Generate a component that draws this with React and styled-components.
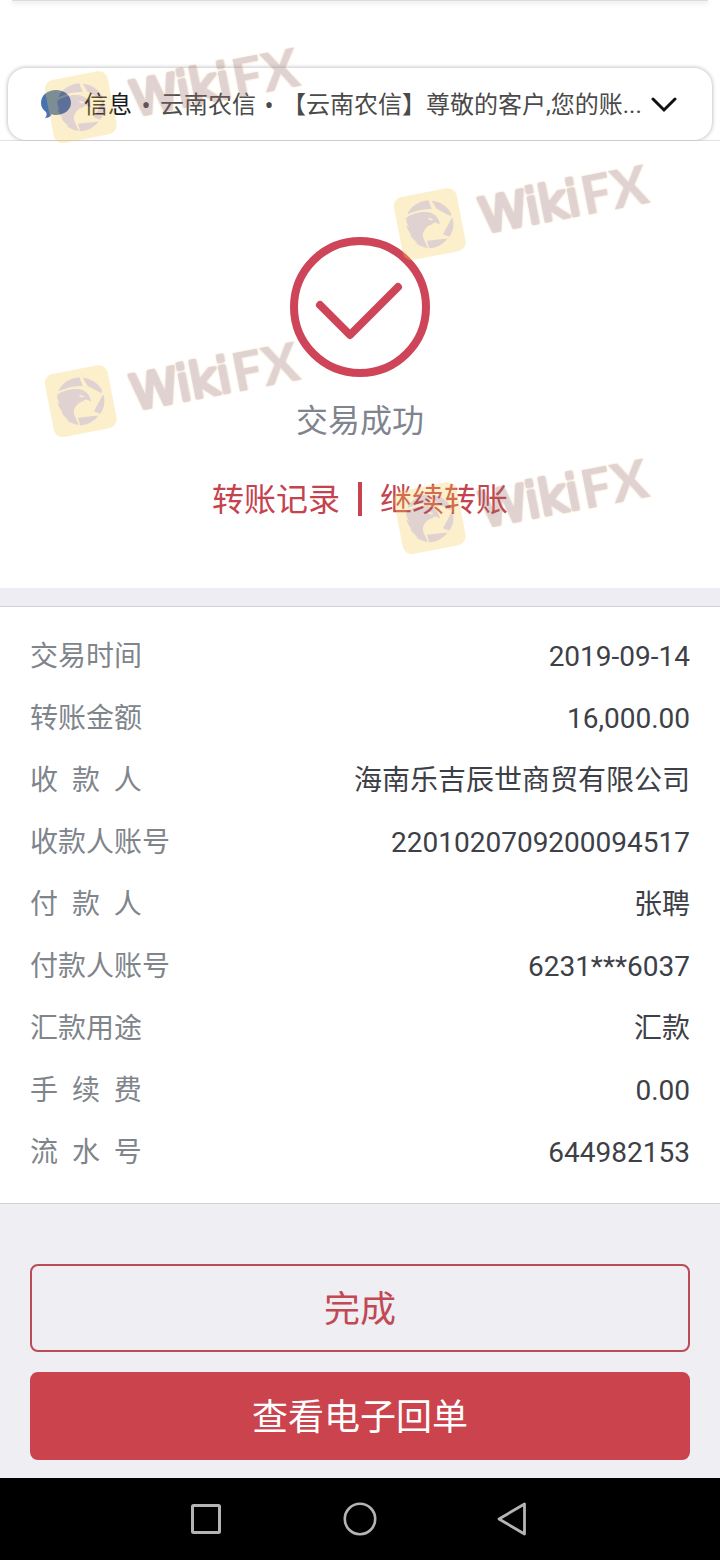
import React from "react";
import styled, { createGlobalStyle } from "styled-components";

const GlobalStyle = createGlobalStyle`
  * { box-sizing: border-box; }
  body {
    margin: 0;
    background: #fff;
    font-family: Roboto, "Noto Sans CJK SC", sans-serif;
    color: #3f4248;
  }
  button { font: inherit; cursor: pointer; }
`;

const Page = styled.div`
  position: relative;
  overflow: hidden;
`;

const TopArea = styled.header`
  padding: 0 8px;
  border-bottom: 1px solid #e2e2e2;
  background: #fff;
`;

const PreviousCard = styled.div`
  height: 1px;
  margin: 0 4px 67px;
  background: #ddd;
  box-shadow: 0 1px 5px #aaa;
`;

const Notification = styled.div`
  display: flex;
  align-items: center;
  height: 72px;
  padding: 2px 34px 0 33px;
  border-radius: 18px;
  background: #fff;
  box-shadow: 0 0 4px #aaa;
  font-size: 24px;
  line-height: 36px;
  white-space: nowrap;
  color: #4a4a4a;
`;

const BubbleIcon = styled.svg`
  flex: none;
  width: 30px;
  height: 30px;
  margin-right: 13px;
`;

const AppName = styled.span`
  color: #1c1c1c;
`;

const Dot = styled.span`
  flex: none;
  width: ${(p) => p.$width}px;
  font-family: "Noto Sans", sans-serif;
  text-align: center;
`;

const Message = styled.span`
  flex: 1;
  min-width: 0;
  overflow: hidden;
`;

const ExpandButton = styled.button`
  display: flex;
  padding: 0;
  border: 0;
  background: none;
  color: #111;
`;

const Result = styled.section`
  display: flex;
  flex-direction: column;
  align-items: center;
  padding: 96px 0 64px;
  background: #fff;
`;

const ResultTitle = styled.h1`
  margin: 20px 0 29px;
  font-size: 32px;
  font-weight: 400;
  line-height: 48px;
  color: #7f848e;
`;

const Links = styled.nav`
  display: flex;
  align-items: center;
  gap: 18px;
  font-size: 32px;
  line-height: 48px;
`;

const ResultLink = styled.a`
  padding-top: 2px;
  color: #c4434e;
  text-decoration: none;
`;

const Divider = styled.span`
  width: 4px;
  height: 34px;
  background: #c5444f;
`;

const Details = styled.dl`
  margin: 0;
  padding: 19px 30px;
  border-top: 1px solid #d2d2d4;
  border-bottom: 1px solid #d2d2d4;
  background: #fff;
`;

const Strip = styled.div`
  height: 18px;
  background: #eeedf4;
`;

const DetailRow = styled.div`
  display: flex;
  justify-content: space-between;
  align-items: center;
  font-size: 28px;
  line-height: 62px;
`;

const Term = styled.dt`
  white-space: pre;
  color: #80858c;
`;

const Value = styled.dd`
  margin: 0;
  color: #3d4047;
`;

const Actions = styled.section`
  display: flex;
  flex-direction: column;
  gap: 20px;
  padding: 60px 30px 18px;
  background: #efeef3;
`;

const ActionButton = styled.button`
  height: 88px;
  padding: 4px 0 0;
  border: 2px solid ${(p) => (p.$filled ? "#cb434d" : "#bb4b56")};
  border-radius: 8px;
  background: ${(p) => (p.$filled ? "#cb434d" : "transparent")};
  color: ${(p) => (p.$filled ? "#fff" : "#c04954")};
  font-size: 36px;
  line-height: 54px;
`;

const SystemBar = styled.nav`
  display: flex;
  justify-content: center;
  align-items: center;
  gap: 120px;
  height: 82px;
  background: #000;
`;

const SystemButton = styled.button`
  display: flex;
  padding: 0;
  border: 0;
  background: none;
  color: #b4b4b4;
`;

const WatermarkLayer = styled.div`
  position: absolute;
  top: 58px;
  left: 48px;
  display: grid;
  grid-template-columns: 252px 252px;
  column-gap: 97px;
  pointer-events: none;
`;

const WatermarkColumn = styled.div`
  display: flex;
  flex-direction: column;
  gap: 232px;
  padding-top: ${(p) => (p.$lower ? 117 : 0)}px;
`;

const Mark = styled.svg`
  display: block;
  width: 252px;
  height: 62px;
  overflow: visible;
  transform: rotate(-11deg);
  opacity: 0.3;
`;

const MarkName = styled.g`
  filter: drop-shadow(0 0 1px #f8cd55);
`;

const details = [
  ["交易时间", "2019-09-14"],
  ["转账金额", "16,000.00"],
  ["收\u00a0\u00a0款\u00a0\u00a0人", "海南乐吉辰世商贸有限公司"],
  ["收款人账号", "2201020709200094517"],
  ["付\u00a0\u00a0款\u00a0\u00a0人", "张聘"],
  ["付款人账号", "6231***6037"],
  ["汇款用途", "汇款"],
  ["手\u00a0\u00a0续\u00a0\u00a0费", "0.00"],
  ["流\u00a0\u00a0水\u00a0\u00a0号", "644982153"],
];

function Watermark() {
  return (
    <Mark viewBox="0 0 252 62" aria-hidden="true">
      <rect x="-1" y="-1" width="64" height="64" rx="9" fill="#f8cd55" />
      <g transform="translate(31 31) rotate(11) scale(.34) translate(-90 -95)" fill="#986c69">
        <path d="M24 66 C34 43 58 27 86 25 L96 51 C72 49 48 56 24 66Z" />
        <path d="M96 26 C121 28 142 42 153 64 L151 72 L110 50Z" />
        <path d="M157 76 C163 98 158 118 147 132 L129 125 L153 80Z" />
        <path d="M142 138 C128 156 109 165 88 166 L82 144 L136 138Z" />
        <path d="M21 76 C42 62 76 54 98 64 C108 69 118 80 120 97 C113 91 108 90 101 91 C98 98 90 97 84 101 C76 108 68 118 70 132 C73 143 80 153 84 165 C69 163 57 158 47 150 L55 151 C44 142 35 134 32 124 L39 129 C28 117 23 108 22 98 L30 105 C23 95 20 86 21 76Z" />
        <path d="M84 76 L101 80 L96 84 L88 82Z" fill="#f8cd55" />
      </g>
      <MarkName fill="#986c69">
        <text
          x="82"
          y="50"
          fontFamily="DejaVu Sans, sans-serif"
          fontSize="48"
          stroke="#986c69"
          strokeWidth="4"
          strokeLinejoin="round"
        >
          Wiki
        </text>
        <text x="185" y="52" fontFamily="Lato, sans-serif" fontSize="54" fontWeight="900">
          FX
        </text>
      </MarkName>
    </Mark>
  );
}

export default function App() {
  return (
    <>
      <GlobalStyle />
      <Page>
        <TopArea>
          <PreviousCard />
          <Notification>
            <BubbleIcon viewBox="0 0 30 30" aria-hidden="true">
              <path
                d="M15 0 C23 0 30 5 30 13 C30 20 23 25 15 25 C13 25 12 25 11 24 C9 27 7 28 4 28 C6 26 6 24 5 22 C2 20 0 17 0 13 C0 5 7 0 15 0Z"
                fill="#4673b0"
              />
            </BubbleIcon>
            <AppName>信息</AppName>
            <Dot $width={28}>•</Dot>
            <span>云南农信</span>
            <Dot $width={26}>•</Dot>
            <Message>【云南农信】尊敬的客户,您的账...</Message>
            <ExpandButton type="button" aria-label="展开">
              <svg width="28" height="16" viewBox="0 0 28 16" fill="none" stroke="currentColor" strokeWidth="3" strokeLinecap="round">
                <path d="M3 2 L14 13 L25 2" />
              </svg>
            </ExpandButton>
          </Notification>
        </TopArea>

        <main>
          <Result>
            <svg width="140" height="140" viewBox="0 0 140 140" fill="none" stroke="#ce455a" aria-hidden="true">
              <circle cx="70" cy="70" r="66" strokeWidth="8" />
              <path d="M30 68 L60 98 L108 50" strokeWidth="8" strokeLinecap="round" strokeLinejoin="round" />
            </svg>
            <ResultTitle>交易成功</ResultTitle>
            <Links>
              <ResultLink href="#records">转账记录</ResultLink>
              <Divider />
              <ResultLink href="#transfer">继续转账</ResultLink>
            </Links>
          </Result>
          <Strip />
          <Details>
            {details.map(([term, value]) => (
              <DetailRow key={term}>
                <Term>{term}</Term>
                <Value>{value}</Value>
              </DetailRow>
            ))}
          </Details>
          <Actions>
            <ActionButton type="button">完成</ActionButton>
            <ActionButton type="button" $filled>查看电子回单</ActionButton>
          </Actions>
        </main>

        <SystemBar aria-label="系统导航">
          <SystemButton type="button" aria-label="最近任务">
            <svg width="34" height="34" viewBox="0 0 34 34" fill="none" stroke="currentColor" strokeWidth="3">
              <rect x="3.5" y="3.5" width="27" height="27" rx="1" />
            </svg>
          </SystemButton>
          <SystemButton type="button" aria-label="主屏幕">
            <svg width="34" height="34" viewBox="0 0 34 34" fill="none" stroke="currentColor" strokeWidth="2.6">
              <circle cx="17" cy="17" r="15.2" />
            </svg>
          </SystemButton>
          <SystemButton type="button" aria-label="返回">
            <svg width="34" height="34" viewBox="0 0 34 34" fill="none" stroke="currentColor" strokeWidth="2.8" strokeLinejoin="round">
              <path d="M2 17 L27.5 2 V32Z" />
            </svg>
          </SystemButton>
        </SystemBar>

        <WatermarkLayer>
          <WatermarkColumn>
            <Watermark />
            <Watermark />
          </WatermarkColumn>
          <WatermarkColumn $lower>
            <Watermark />
            <Watermark />
          </WatermarkColumn>
        </WatermarkLayer>
      </Page>
    </>
  );
}
